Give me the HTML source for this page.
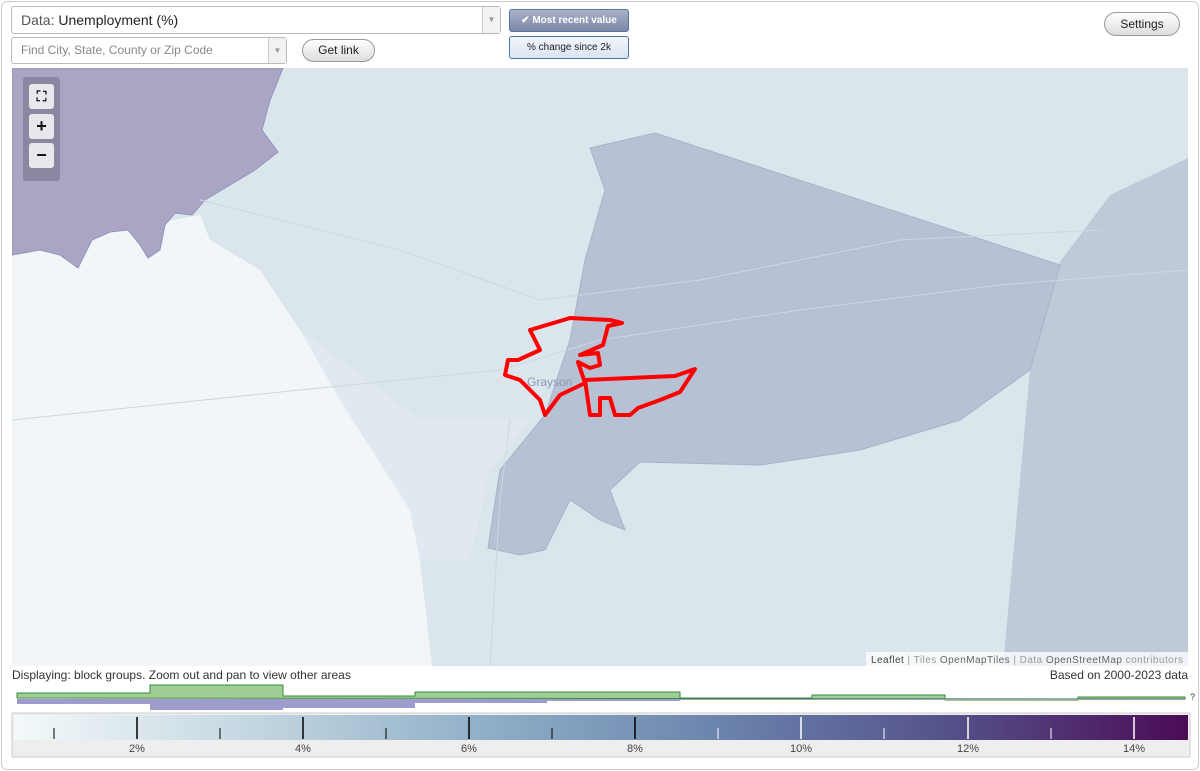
<!DOCTYPE html>
<html><head><meta charset="utf-8"><style>
*{box-sizing:border-box;margin:0;padding:0}
body{width:1200px;height:771px;background:#fff;font-family:"Liberation Sans",sans-serif;position:relative;overflow:hidden}
.frame{position:absolute;left:1px;top:1px;width:1198px;height:769px;border:1px solid #ccc;border-radius:6px}
.sel{position:absolute;border:1px solid #bbb;border-radius:3px;background:#fff;color:#555}
.sel .arr{position:absolute;right:0;top:0;bottom:0;width:18px;border-left:1px solid #ccc;background:#f2f2f2;color:#999;font-size:8px;text-align:center}
.btn{position:absolute;border:1px solid #999;border-radius:12px;background:linear-gradient(#fff,#ddd);font-size:12px;text-align:center;color:#222}
.tg{position:absolute;border:1px solid #4a77a8;border-radius:3px;font-size:10px;text-align:center}
.z{position:absolute;left:23px;width:37px;height:104px;top:77px;background:rgba(100,100,120,.45);border-radius:3px}
.z div{position:absolute;left:6px;width:25px;height:25px;background:#e8e8ec;border-radius:3px;text-align:center;font-weight:bold;font-size:18px;line-height:24px;color:#111}
</style></head><body>
<div class="frame"></div>
<div class="sel" style="left:11px;top:6px;width:490px;height:28px;font-size:14px;line-height:26px;padding-left:9px">Data: <span style="color:#222">Unemployment (%)</span><div class="arr" style="line-height:26px">▼</div></div>
<div class="sel" style="left:11px;top:37px;width:276px;height:27px;font-size:12px;line-height:25px;padding-left:9px;color:#888">Find City, State, County or Zip Code<div class="arr" style="line-height:25px">▼</div></div>
<div class="btn" style="left:302px;top:39px;width:73px;height:23px;line-height:21px">Get link</div>
<div class="tg" style="left:509px;top:9px;width:120px;height:23px;background:linear-gradient(#a9b0c8,#7d86a6);color:#fff;font-weight:bold;line-height:21px">✔ Most recent value</div>
<div class="tg" style="left:509px;top:36px;width:120px;height:23px;background:linear-gradient(#f2f6fb,#d8e4f1);color:#222;line-height:21px">% change since 2k</div>
<div class="btn" style="left:1104px;top:12px;width:76px;height:24px;line-height:22px">Settings</div>

<svg style="position:absolute;left:0;top:0" width="1200" height="771">
<defs><clipPath id="m"><rect x="12" y="68" width="1176" height="598"/></clipPath>
<linearGradient id="g" x1="0" x2="1"><stop offset="0" stop-color="#f4f9fa"/><stop offset=".2" stop-color="#c4d7e1"/><stop offset=".4" stop-color="#90afc8"/><stop offset=".6" stop-color="#6b84ad"/><stop offset=".8" stop-color="#54508a"/><stop offset="1" stop-color="#4b0b55"/></linearGradient></defs>
<g clip-path="url(#m)">
<rect x="12" y="68" width="1176" height="598" fill="#dae5ec"/>
<polygon fill="#f2f6f8" points="12,250 200,215 210,240 260,270 300,330 340,400 410,510 420,560 432,666 12,666"/>
<polygon fill="#e0e9ef" points="300,330 340,400 410,510 420,560 470,560 490,470 530,420 420,420"/>
<polygon fill="#a9a5c3" stroke="#8f95c0" stroke-width="1" points="12,68 283,68 270,100 262,130 278,152 255,170 230,185 205,200 192,215 175,213 165,225 160,250 148,258 140,245 128,230 110,232 92,240 78,268 60,255 40,250 12,255"/>
<polygon fill="#bfcad9" points="1060,262 1110,195 1188,158 1188,666 1003,666 1030,370"/>
<polygon fill="#b7c1d4" stroke="#a7b2c8" stroke-width="1" points="590,148 655,133 1060,265 1030,370 960,420 860,450 760,465 640,462 610,490 625,530 600,520 570,500 545,550 520,555 488,548 500,470 545,415 570,340 585,260 605,190"/>
<g fill="none" stroke="#cdd7df" stroke-width="1"><path d="M12,420 L300,390 L500,370 L600,340 L800,310 L1000,285 L1188,270"/><path d="M200,200 L400,250 L540,300 L700,280 L900,240 L1100,230"/><path d="M510,420 L500,500 L490,666"/></g>
<g fill="none" stroke="#f00" stroke-width="4" stroke-linejoin="round">
<polygon points="530,330 570,318 610,320 622,323 608,326 603,345 580,355 598,353 600,365 590,368 578,362 585,383 560,395 545,415 540,400 520,380 505,375 508,360 518,360 540,350 535,340"/>
<polygon points="585,380 675,376 695,369 680,392 660,400 638,408 630,415 615,415 610,398 600,398 600,415 590,415"/>
</g>
<text x="527" y="386" font-size="12" fill="#8a9cb2">Grayson</text>
</g>
<rect x="866" y="652" width="322" height="14" fill="rgba(255,255,255,.75)"/>
<text x="871" y="663" font-size="10" fill="#999" textLength="312"><tspan fill="#444">Leaflet</tspan> | Tiles <tspan fill="#666">OpenMapTiles</tspan> | Data <tspan fill="#666">OpenStreetMap</tspan> contributors</text>
<text x="12" y="679" font-size="12" fill="#333">Displaying: block groups. Zoom out and pan to view other areas</text>
<text x="1188" y="679" font-size="12" fill="#333" text-anchor="end">Based on 2000-2023 data</text>
<path d="M17,698 V693 H150 V685 H283 V696 H415 V692 H680 V698 H812 V695 H945 V700 H1078 V697 H1185 V699 Z" fill="#9fcf97" stroke="#3a8a3a" stroke-width="1"/>
<path d="M17,699 V704 H150 V710 H283 V708 H415 V703 H547 V701 H680 V700 H945 V700 H1185 V699 Z" fill="#9d9ccc"/>
<text x="1190" y="700" font-size="9" fill="#333">?</text>
<rect x="12" y="713" width="1178" height="44" fill="#eee" stroke="#ccc"/>
<rect x="14" y="715" width="1174" height="25" fill="url(#g)"/>
<g stroke="#000" stroke-width="1.5"><path d="M137,717V739M303,717V739M469,717V739M635,717V739"/><path stroke-width="1" d="M54,728V739M220,728V739M386,728V739M552,728V739"/></g>
<g stroke="#fff" stroke-width="1.5"><path d="M801,717V739M968,717V739M1134,717V739"/><path stroke-width="1" d="M718,728V739M884,728V739M1051,728V739"/></g>
<g font-size="11" fill="#444" text-anchor="middle"><text x="137" y="752">2%</text><text x="303" y="752">4%</text><text x="469" y="752">6%</text><text x="635" y="752">8%</text><text x="801" y="752">10%</text><text x="968" y="752">12%</text><text x="1134" y="752">14%</text></g>
</svg>
<div class="z"><div style="top:7px;font-size:14px">⛶</div><div style="top:37px">+</div><div style="top:66px">−</div></div>
</body></html>
